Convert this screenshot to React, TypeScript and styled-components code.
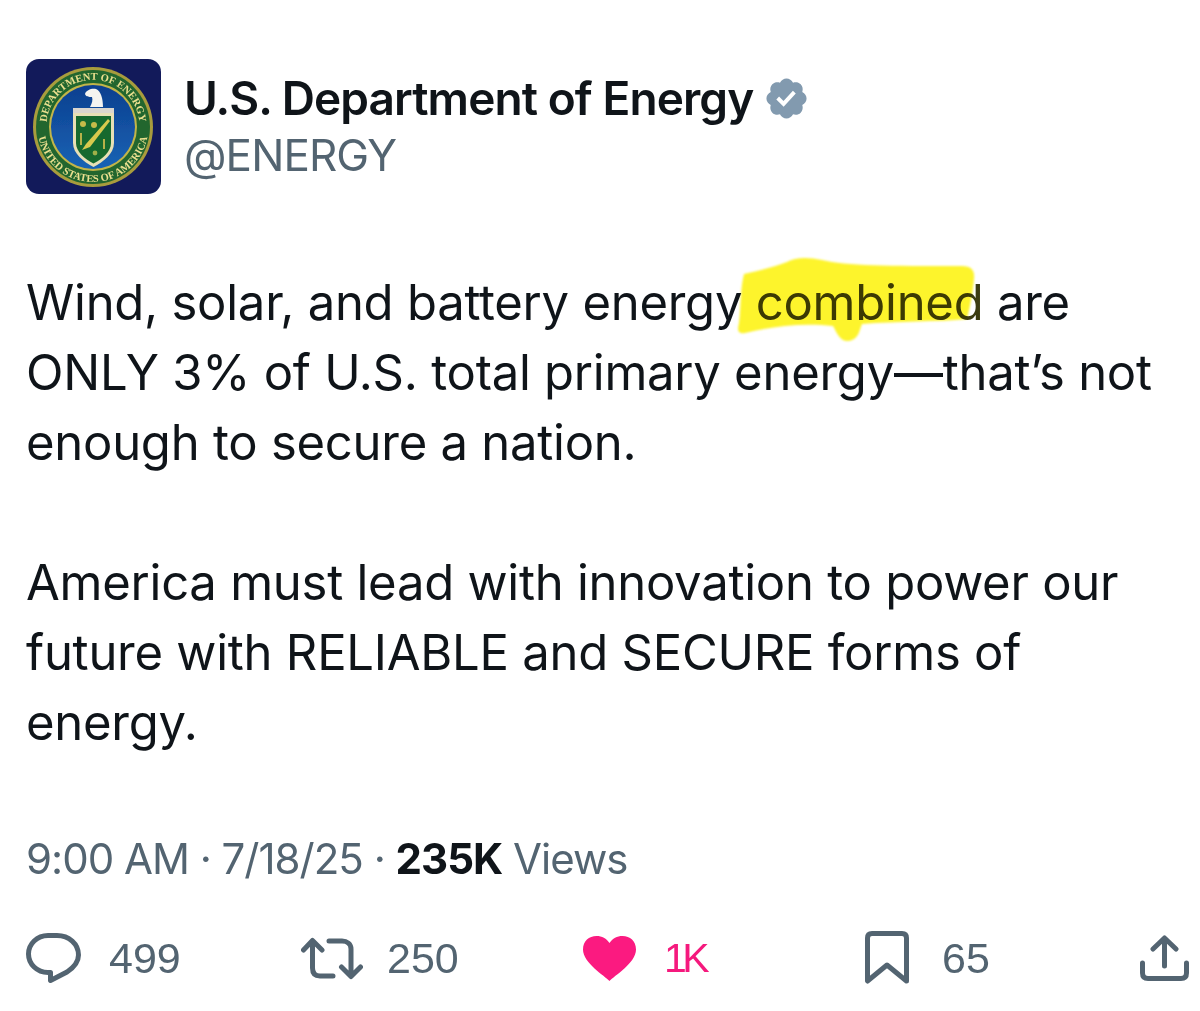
import React from "react";
import styled, { createGlobalStyle } from "styled-components";

const Global = createGlobalStyle`
  html, body { margin: 0; padding: 0; background: #fff; }
  body { font-family: Inter, "Liberation Sans", sans-serif; color: #0f1419; }
`;

const Page = styled.main`
  width: 1200px;
  height: 1011px;
  box-sizing: border-box;
  padding: 59px 10px 0 26px;
  overflow: hidden;
`;

const Header = styled.header`
  display: flex;
  align-items: flex-start;
  gap: 23px;
`;

const Avatar = styled.svg`
  width: 135px;
  height: 135px;
  flex: none;
  display: block;
`;

const Identity = styled.div`
  display: flex;
  flex-direction: column;
  padding-top: 10px;
`;

const NameRow = styled.div`
  display: flex;
  align-items: center;
  gap: 10px;
  height: 58px;
`;

const Name = styled.span`
  font-size: 46px;
  font-weight: 600;
  letter-spacing: -0.9px;
`;

const Badge = styled.svg`
  width: 47px;
  height: 47px;
  fill: #829aaf;
`;

const Handle = styled.span`
  font-size: 44px;
  line-height: 56px;
  color: #536471;
  letter-spacing: -0.9px;
`;

const Body = styled.div`
  margin-top: 74px;
  display: flex;
  flex-direction: column;
  gap: 70px;
`;

const Paragraph = styled.p`
  margin: 0;
  font-size: 49px;
  line-height: 70px;
  letter-spacing: -0.25px;
  white-space: nowrap;
`;

const Marked = styled.span`
  position: relative;
  color: #3c3c10;
`;

const Highlight = styled.svg`
  position: absolute;
  left: -19px;
  top: -16px;
  width: 240px;
  height: 86px;
  mix-blend-mode: multiply;
  pointer-events: none;
  filter: blur(0.8px);
`;

const Meta = styled.div`
  margin-top: 75px;
  font-size: 42px;
  line-height: 52px;
  color: #536471;
  letter-spacing: -1px;
  white-space: nowrap;
`;

const Strong = styled.strong`
  color: #0f1419;
  font-weight: 700;
`;

const Actions = styled.div`
  margin-top: 45px;
  display: grid;
  grid-template-columns: 275px 282px 282px 275px auto;
  align-items: center;
  height: 56px;
`;

const Action = styled.div<{ $pad: number }>`
  display: flex;
  align-items: center;
  gap: ${(p) => p.$pad}px;
`;

const Count = styled.span<{ $pink?: boolean }>`
  font-family: "Liberation Sans", Arial, sans-serif;
  font-size: ${(p) => (p.$pink ? 41 : 43)}px;
  line-height: 1;
  color: ${(p) => (p.$pink ? "#f5197d" : "#536471")};
  letter-spacing: ${(p) => (p.$pink ? "-4.5px" : "0")};
`;

const Icon = styled.svg<{ $w: number; $h: number }>`
  width: ${(p) => p.$w}px;
  height: ${(p) => p.$h}px;
  flex: none;
  fill: none;
  stroke: #536471;
  stroke-width: 5;
  stroke-linecap: round;
  stroke-linejoin: round;
`;

const Seal = () => (
  <Avatar viewBox="0 0 135 135" role="img" aria-label="Department of Energy seal">
    <defs>
      <path id="arcTop" d="M 22 79 A 46.5 46.5 0 1 1 112 79" />
      <path id="arcBottom" d="M 12.5 57 A 55.5 55.5 0 1 0 121.5 57" />
      <filter id="soft"><feGaussianBlur stdDeviation="0.6" /></filter>
      <linearGradient id="blue" x1="0" y1="0" x2="0" y2="1">
        <stop offset="0" stopColor="#0d3f8f" />
        <stop offset="1" stopColor="#1763b4" />
      </linearGradient>
    </defs>
    <rect width="135" height="135" rx="13" fill="#121a5a" />
    <g filter="url(#soft)">
      <circle cx="67" cy="68" r="60" fill="#a89c3c" />
      <circle cx="67" cy="68" r="57" fill="#23662f" />
      <circle cx="67" cy="68" r="44" fill="#c2b548" />
      <circle cx="67" cy="68" r="42" fill="url(#blue)" />
      <text fontFamily="Liberation Serif, serif" fontWeight="700" fontSize="10.5" fill="#ebe08f">
        <textPath href="#arcTop" startOffset="50%" textAnchor="middle">DEPARTMENT OF ENERGY</textPath>
      </text>
      <text fontFamily="Liberation Serif, serif" fontWeight="700" fontSize="10.5" fill="#ebe08f">
        <textPath href="#arcBottom" startOffset="50%" textAnchor="middle">UNITED STATES OF AMERICA</textPath>
      </text>
      <path d="M59 35 C60 31 66 29 70 30 C75 32 77 40 77 48 H64 C66 44 67 41 66 38 C63 38 60 38 59 35 Z" fill="#f4f4f0" />
      <rect x="47" y="49" width="41" height="5" fill="#d9d6ce" />
      <path d="M47 54 H88 V84 C88 95 77 103 67.5 108 C58 103 47 95 47 84 Z" fill="#e7e0b5" />
      <path d="M50 57 H85 V84 C85 93 76 100 67.5 104.5 C59 100 50 93 50 84 Z" fill="#12692f" />
      <path d="M56 91 L60 85 L82 60 L84 62 L64 88 Z" fill="#d8c94e" />
      <circle cx="57" cy="65" r="3" fill="#c5bb4a" />
      <circle cx="68" cy="66" r="3" fill="#c5bb4a" />
      <path d="M55 74 V86 M78 80 V90" stroke="#b6b24a" strokeWidth="2" />
      <circle cx="69" cy="94" r="2.4" fill="#9fb04a" />
    </g>
  </Avatar>
);

export default function App() {
  return (
    <Page>
      <Global />
      <Header>
        <Seal />
        <Identity>
          <NameRow>
            <Name>U.S. Department of Energy</Name>
            <Badge viewBox="0 0 24 24" aria-label="Verified">
              <path fillRule="evenodd" d="M22.25 12c0-1.43-.88-2.67-2.19-3.34.46-1.39.2-2.9-.81-3.91s-2.52-1.27-3.91-.81c-.66-1.31-1.91-2.19-3.34-2.19s-2.67.88-3.33 2.19c-1.4-.46-2.91-.2-3.92.81s-1.26 2.52-.8 3.91c-1.31.67-2.2 1.91-2.2 3.34s.89 2.67 2.2 3.34c-.46 1.39-.21 2.9.8 3.91s2.52 1.26 3.91.81c.67 1.31 1.91 2.19 3.34 2.19s2.68-.88 3.34-2.19c1.39.45 2.9.2 3.91-.81s1.27-2.52.81-3.91c1.31-.67 2.19-1.91 2.19-3.34zm-11.71 4.2L6.8 12.46l1.41-1.42 2.26 2.26 4.8-5.23 1.47 1.36-6.2 6.77z" />
            </Badge>
          </NameRow>
          <Handle>@ENERGY</Handle>
        </Identity>
      </Header>
      <Body>
        <Paragraph>
          Wind, solar, and battery energy{" "}
          <Marked>
            combined
            <Highlight viewBox="0 0 240 86" aria-hidden="true">
              <path
                fill="#fdf42c"
                d="M7 17 C20 14 38 10 50 5 C58 0 72 0 85 3 C110 9 150 9 225 9 C235 9 238 14 237 22 C236 34 233 50 230 62 C200 65 160 64 125 67 C122 74 122 82 112 84 C103 85 100 76 96 69 C70 66 40 68 8 76 C1 77 0 74 2 66 C4 50 3 32 7 17 Z"
              />
            </Highlight>
          </Marked>{" "}
          are
          <br />
          ONLY 3% of U.S. total primary energy—that’s not
          <br />
          enough to secure a nation.
        </Paragraph>
        <Paragraph>
          America must lead with innovation to power our
          <br />
          future with RELIABLE and SECURE forms of
          <br />
          energy.
        </Paragraph>
      </Body>
      <Meta>
        9:00 AM · 7/18/25 · <Strong>235K</Strong> Views
      </Meta>
      <Actions>
        <Action $pad={28}>
          <Icon $w={55} $h={51} viewBox="0 0 55 51" aria-hidden="true">
            <path d="M22 2.5 H31 C43 2.5 52.5 11 52.5 22 C52.5 30 47 35 41 39 L24.5 47.5 V39.5 H22 C11 39.5 2.5 31 2.5 21 C2.5 11 11 2.5 22 2.5 Z" />
          </Icon>
          <Count>499</Count>
        </Action>
        <Action $pad={24}>
          <Icon $w={62} $h={43} viewBox="0 0 62 43" aria-hidden="true">
            <path d="M2.5 13 L11.5 3.5 L21 13 M11.5 4 V31 C11.5 36 14 39 19 39 H32 M28 4 H41 C46 4 50 7 50 12 V39 M40.5 30 L50 39.5 L59.5 30" />
          </Icon>
          <Count>250</Count>
        </Action>
        <Action $pad={28}>
          <Icon $w={53} $h={45} viewBox="0 0 53 45" aria-hidden="true">
            <path
              fill="#fb1a80"
              stroke="none"
              d="M26.5 45 C22 40 0 27 0 13.5 C0 5 6 0 13.5 0 C19 0 23.5 2.5 26.5 7 C29.5 2.5 34 0 39.5 0 C47 0 53 5 53 13.5 C53 27 31 40 26.5 45 Z"
            />
          </Icon>
          <Count $pink>1K</Count>
        </Action>
        <Action $pad={33}>
          <Icon $w={44} $h={54} viewBox="0 0 44 54" aria-hidden="true">
            <path strokeLinecap="butt" d="M2.5 50 V7 C2.5 4 4 2.5 7 2.5 H37 C40 2.5 41.5 4 41.5 7 V50 L22 34 Z" />
          </Icon>
          <Count>65</Count>
        </Action>
        <Action $pad={0}>
          <Icon $w={49} $h={46} viewBox="0 0 49 46" aria-hidden="true">
            <path d="M24.5 4 V31 M13 14 L24.5 3 L36 14 M2.5 28 V38 C2.5 41.5 4.5 43.5 8 43.5 H41 C44.5 43.5 46.5 41.5 46.5 38 V28" />
          </Icon>
        </Action>
      </Actions>
    </Page>
  );
}
